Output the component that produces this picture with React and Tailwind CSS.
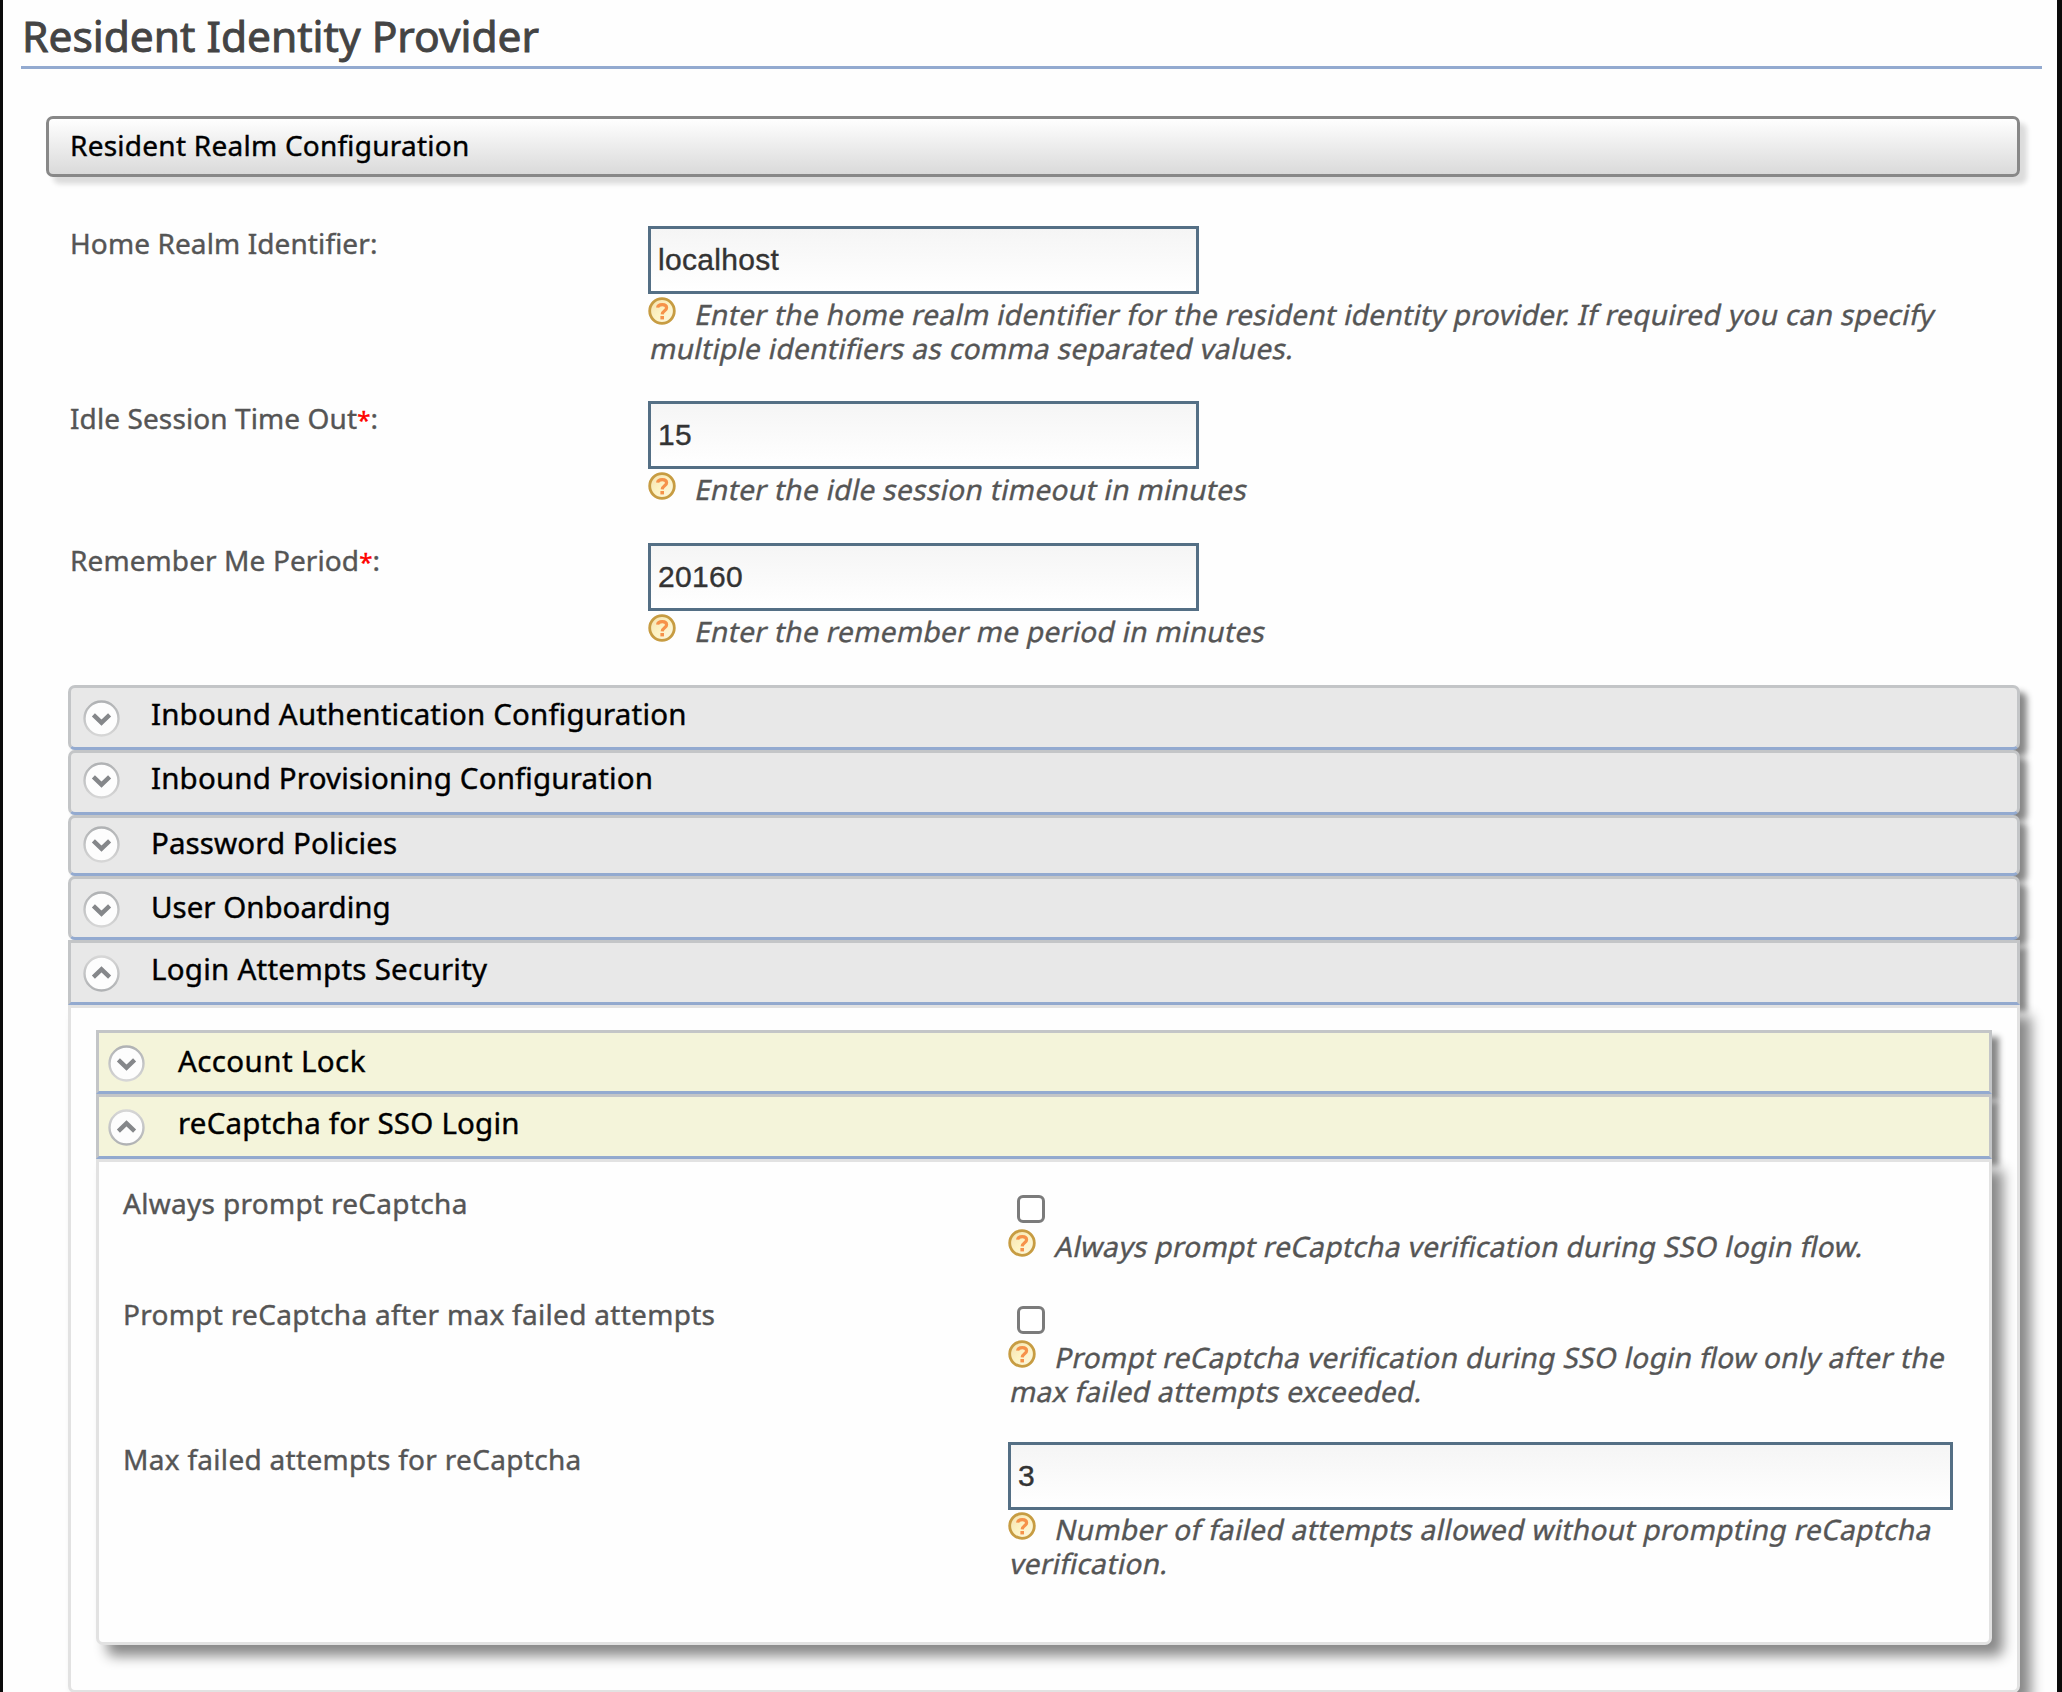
import React from "react";

function Chevron({ up }) {
  return (
    <svg viewBox="0 0 37 37" className={up ? "h-[37px] w-[37px] rotate-180" : "h-[37px] w-[37px]"}>
      <defs>
        <linearGradient id="ring" x1="0" y1="0" x2="0" y2="1">
          <stop offset="0" stopColor="#b0b2b4" />
          <stop offset="1" stopColor="#d6d6d6" />
        </linearGradient>
      </defs>
      <circle cx="18.5" cy="18.5" r="17" fill="#fdfdfd" stroke="url(#ring)" strokeWidth="2.4" />
      <path d="M10.4 14.8 L18.5 22.6 L26.6 14.8" fill="none" stroke="#85878a" strokeWidth="4.4" />
    </svg>
  );
}

function HelpIcon() {
  return (
    <svg viewBox="0 0 28 28" className="h-7 w-7 shrink-0">
      <defs>
        <linearGradient id="help" x1="0" y1="0" x2="1" y2="1">
          <stop offset="0" stopColor="#f3dfae" />
          <stop offset="0.5" stopColor="#fdf3c4" />
          <stop offset="1" stopColor="#fbf6e6" />
        </linearGradient>
      </defs>
      <circle cx="14" cy="14" r="12.3" fill="url(#help)" stroke="#c79c42" strokeWidth="2.8" />
      <path d="M9.6 10.6 C10 6.8 18.4 6.4 18.6 10.7 C18.7 13.8 14.4 13.8 14.2 17.4" fill="none" stroke="#f6924a" strokeWidth="3.2" />
      <rect x="12.4" y="19" width="3.6" height="3.4" fill="#f6924a" />
    </svg>
  );
}

function Hint({ lines }) {
  return (
    <div className="text-[28px] leading-[34px] tracking-[0.35px] whitespace-nowrap text-[#555]">
      <div className="flex h-[34px]">
        <HelpIcon />
        <span className="ml-[20px] -skew-x-12">{lines[0]}</span>
      </div>
      {lines[1] && <span className="inline-block -skew-x-12 pl-[3px]">{lines[1]}</span>}
    </div>
  );
}

function TextField({ value, width }) {
  return (
    <div className={`${width} flex h-[68px] items-center border-3 border-[#546f85] bg-linear-to-b from-[#f5f5f5] to-white pb-[2px] pl-[7px] font-['Liberation_Sans',sans-serif] text-[30px] tracking-[0.3px] text-[#333]`}>
      {value}
    </div>
  );
}

function Field({ label, required, value, hint, height }) {
  return (
    <div className={`flex ${height}`}>
      <div className="w-[578px] shrink-0 text-[28px] leading-[34px] tracking-[0.1px]">
        {label}
        {required && <span className="text-[24px] text-[#f00]">*</span>}:
      </div>
      <div>
        <TextField value={value} width="w-[551px]" />
        <div className="mt-[3px]">
          <Hint lines={hint} />
        </div>
      </div>
    </div>
  );
}

function Bar({ title, up, look, iconPad, textPad }) {
  return (
    <div className={`flex border-3 border-[#c3c5c7] border-b-[#93aad0] shadow-[7px_7px_6px_#888] ${look}`}>
      <div className={`pl-3 ${iconPad}`}>
        <Chevron up={up} />
      </div>
      <div className={`text-[29.5px] leading-[34px] text-black ${textPad}`}>{title}</div>
    </div>
  );
}

function Row({ label, height, children }) {
  return (
    <div className={`flex ${height}`}>
      <div className="w-[885px] shrink-0 text-[28px] leading-[34px] tracking-[0.3px]">{label}</div>
      <div className="w-[945px]">{children}</div>
    </div>
  );
}

function Checkbox() {
  return <div className="mt-[9px] mb-[6px] ml-[9px] h-7 w-7 rounded-[6px] border-3 border-[#7b7b7b] bg-white" />;
}

export default function App() {
  return (
    <div className="h-[1692px] w-[2062px] overflow-hidden border-r-[5px] border-l-3 border-[#0b0b0b] bg-[#fefefe] font-['Noto_Sans',sans-serif] text-[#555] [font-feature-settings:'liga'_1] [-webkit-text-stroke:0.4px]">
      <h1 className="mr-[15px] ml-[18px] h-[69px] border-b-3 border-[#93aad0] pt-[11px] pl-[1px] text-[42.5px] leading-[50px] text-[#444] [-webkit-text-stroke:0.9px]">
        Resident Identity Provider
      </h1>
      <h2 className="mt-[47px] mr-[37px] ml-[43px] h-[61px] rounded-[7px] border-3 border-[#888] bg-linear-to-b from-white to-[#dadada] pt-[9px] pl-[21px] text-[28px] leading-[34px] tracking-[0.25px] text-black shadow-[7px_7px_5px_#dcdcdc]">
        Resident Realm Configuration
      </h2>

      <div className="mt-[49px] ml-[67px]">
        <Field
          label="Home Realm Identifier"
          value="localhost"
          height="h-[175px]"
          hint={[
            "Enter the home realm identifier for the resident identity provider. If required you can specify",
            "multiple identifiers as comma separated values.",
          ]}
        />
        <Field label="Idle Session Time Out" required value="15" height="h-[142px]" hint={["Enter the idle session timeout in minutes"]} />
        <Field label="Remember Me Period" required value="20160" height="h-[142px]" hint={["Enter the remember me period in minutes"]} />
      </div>

      <div className="mr-[37px] ml-[65px]">
        <Bar title="Inbound Authentication Configuration" look="h-[65px] rounded-[7px] bg-[#e8e8e8]" iconPad="pt-[12px]" textPad="pl-[31px] pt-[9px] tracking-[0.17px]" />
        <Bar title="Inbound Provisioning Configuration" look="h-[65px] rounded-[7px] bg-[#e8e8e8]" iconPad="pt-[9px]" textPad="pl-[31px] pt-[8px] tracking-[0.17px]" />
        <Bar title="Password Policies" look="h-[61px] rounded-[7px] bg-[#e8e8e8]" iconPad="pt-[8px]" textPad="pl-[31px] pt-[8px] tracking-[0.1px]" />
        <Bar title="User Onboarding" look="h-[64px] rounded-[7px] bg-[#e8e8e8]" iconPad="pt-[12px]" textPad="pl-[31px] pt-[11px]" />
        <Bar up title="Login Attempts Security" look="h-[65px] bg-[#e8e8e8]" iconPad="pt-[12px]" textPad="pl-[31px] pt-[9px] tracking-[0.25px]" />

        <div className="h-[688px] rounded-b-[7px] border-3 border-[#e2e2e2] bg-[#fefefe] px-[25px] pt-[22px] shadow-[11px_11px_13px_#888]">
          <Bar title="Account Lock" look="h-[64px] bg-[#f4f4da]" iconPad="pt-[12px] -ml-[3px]" textPad="pl-[33px] pt-[11px] tracking-[0.4px]" />
          <Bar up title="reCaptcha for SSO Login" look="h-[65px] bg-[#f4f4da]" iconPad="pt-[12px] -ml-[3px]" textPad="pl-[33px] pt-[9px] tracking-[0.2px]" />

          <div className="h-[486px] rounded-b-[7px] border-3 border-[#e2e2e2] bg-[#fefefe] pt-[24px] pl-[24px] shadow-[11px_11px_13px_#888]">
            <Row label="Always prompt reCaptcha" height="h-[111px]">
              <Checkbox />
              <Hint lines={["Always prompt reCaptcha verification during SSO login flow."]} />
            </Row>
            <Row label="Prompt reCaptcha after max failed attempts" height="h-[145px]">
              <Checkbox />
              <Hint lines={["Prompt reCaptcha verification during SSO login flow only after the", "max failed attempts exceeded."]} />
            </Row>
            <Row label="Max failed attempts for reCaptcha" height="h-[160px]">
              <TextField value="3" width="w-[945px]" />
              <div className="mt-[2px]">
                <Hint lines={["Number of failed attempts allowed without prompting reCaptcha", "verification."]} />
              </div>
            </Row>
          </div>
        </div>
      </div>
    </div>
  );
}
